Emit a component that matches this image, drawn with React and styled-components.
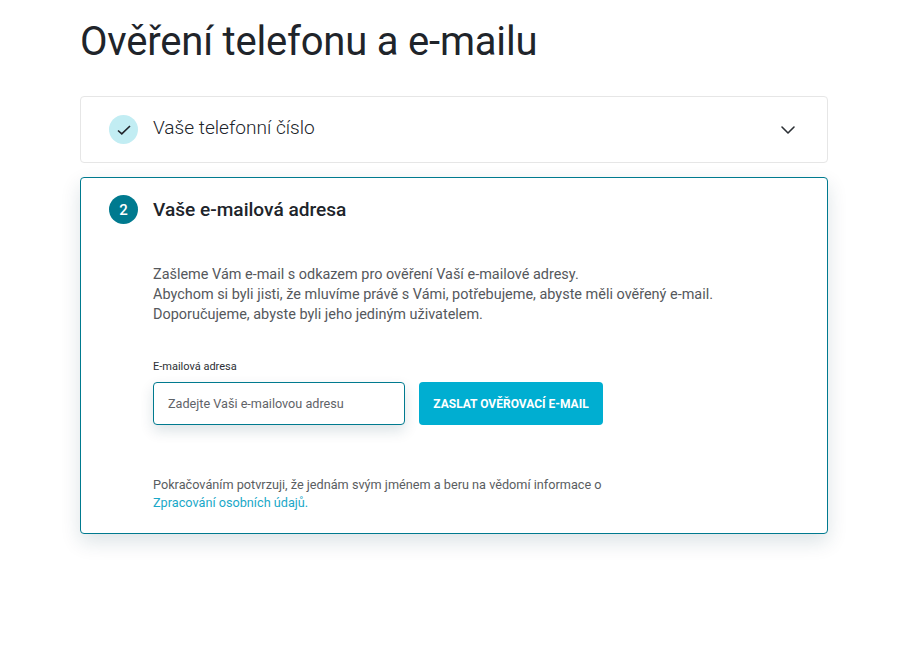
import styled, { createGlobalStyle } from "styled-components";
import { ChevronDown } from "lucide-react";

const GlobalStyle = createGlobalStyle`
  html, body {
    margin: 0;
    padding: 0;
    background: #ffffff;
    font-family: Roboto, "Noto Sans", sans-serif;
    color: #1f2328;
  }
`;

const Page = styled.main`
  width: 748px;
  margin: 0 0 0 80px;
  padding-bottom: 118px;
`;

const Title = styled.h1`
  margin: 0;
  height: 96px;
  padding-top: 15px;
  box-sizing: border-box;
  font-size: 40px;
  line-height: 54px;
  font-weight: 400;
  letter-spacing: -0.2px;
  color: #20242a;
`;

const Card = styled.section`
  box-sizing: border-box;
  border-radius: 4px;
  background: #fff;
  border: 1px solid ${(p) => (p.$active ? "#007a8f" : "#e6e6e6")};
  box-shadow: ${(p) => (p.$active ? "0 8px 20px rgba(0, 60, 80, 0.14)" : "none")};
  padding: ${(p) => (p.$active ? "17px 28px 21px" : "18px 28px")};
  margin-bottom: 14px;
`;

const CardHead = styled.div`
  display: flex;
  align-items: center;
  gap: 15px;
  height: 29px;
`;

const Badge = styled.span`
  flex: none;
  width: 29px;
  height: 29px;
  border-radius: 50%;
  display: flex;
  align-items: center;
  justify-content: center;
  font-size: 15px;
  font-weight: 500;
  color: ${(p) => (p.$done ? "#20242a" : "#fff")};
  background: ${(p) => (p.$done ? "#c2edf3" : "#007a8f")};
`;

const CardTitle = styled.h2`
  margin: 0;
  flex: 1;
  font-size: 19.1px;
  line-height: 24px;
  padding-bottom: ${(p) => (p.$active ? "0" : "3px")};
  font-weight: ${(p) => (p.$active ? 500 : 300)};
  color: #20242a;
`;

const Chevron = styled(ChevronDown)`
  flex: none;
  margin-right: -1px;
  color: #2c3035;
`;

const Body = styled.div`
  padding: 41px 0 0 44px;
`;

const Intro = styled.p`
  margin: 0;
  font-size: 14.45px;
  line-height: 20px;
  color: #55585c;
`;

const FieldLabel = styled.label`
  display: block;
  margin-top: 34px;
  font-size: 11px;
  line-height: 16px;
  color: #2c3035;
`;

const FieldRow = styled.div`
  display: flex;
  gap: 14px;
  margin-top: 7px;
`;

const Input = styled.input`
  box-sizing: border-box;
  width: 252px;
  height: 43px;
  padding: 0 14px;
  border: 1px solid #007a8f;
  border-radius: 4px;
  outline: none;
  font-family: inherit;
  font-size: 12.65px;
  box-shadow: 0 6px 14px rgba(0, 60, 80, 0.14);
  &::placeholder {
    color: #5f6368;
    opacity: 1;
  }
`;

const Submit = styled.button`
  box-sizing: border-box;
  width: 184px;
  height: 43px;
  border: 0;
  border-radius: 4px;
  background: #00aed1;
  color: #fff;
  font-family: inherit;
  font-size: 12px;
  font-weight: 700;
`;

const Note = styled.p`
  margin: 51px 0 0;
  font-size: 12.7px;
  line-height: 18px;
  color: #5a5d61;
`;

const NoteLink = styled.a`
  color: #1aa8c8;
  text-decoration: none;
`;

export default function App() {
  return (
    <Page>
      <GlobalStyle />
      <Title>Ověření telefonu a e-mailu</Title>

      <Card>
        <CardHead>
          <Badge $done>
            <svg width="14" height="14" viewBox="0 0 14 14" fill="none" stroke="#20242a" strokeWidth="1.6">
              <path d="M1 7.5l3.8 3.4L13 3" />
            </svg>
          </Badge>
          <CardTitle>Vaše telefonní číslo</CardTitle>
          <Chevron size={24} strokeWidth={1.6} />
        </CardHead>
      </Card>

      <Card $active>
        <CardHead>
          <Badge>2</Badge>
          <CardTitle $active>Vaše e-mailová adresa</CardTitle>
        </CardHead>
        <Body>
          <Intro>
            Zašleme Vám e-mail s odkazem pro ověření Vaší e-mailové adresy.
            <br />
            Abychom si byli jisti, že mluvíme právě s Vámi, potřebujeme, abyste měli ověřený e-mail.
            <br />
            Doporučujeme, abyste byli jeho jediným uživatelem.
          </Intro>
          <FieldLabel htmlFor="email">E-mailová adresa</FieldLabel>
          <FieldRow>
            <Input id="email" type="email" placeholder="Zadejte Vaši e-mailovou adresu" />
            <Submit type="button">ZASLAT OVĚŘOVACÍ E-MAIL</Submit>
          </FieldRow>
          <Note>
            Pokračováním potvrzuji, že jednám svým jménem a beru na vědomí informace o
            <br />
            <NoteLink href="#">Zpracování osobních údajů.</NoteLink>
          </Note>
        </Body>
      </Card>
    </Page>
  );
}
